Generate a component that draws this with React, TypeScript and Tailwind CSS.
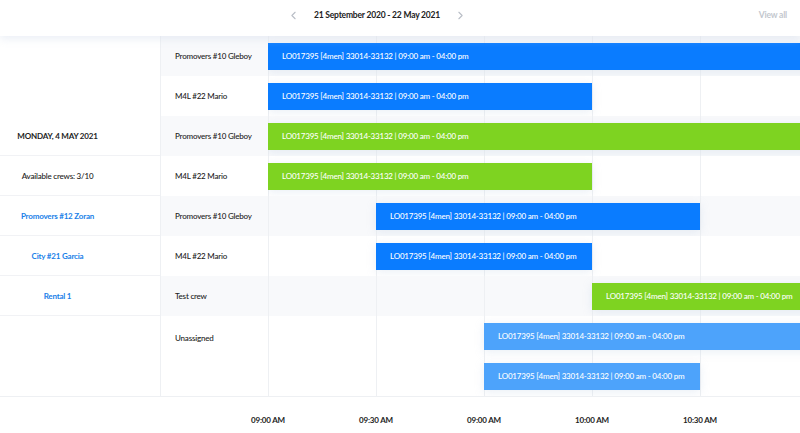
import { ChevronLeft, ChevronRight } from "lucide-react";

type Bar = { start: number; span: number; color: string };
type Row = { crew: string; bars: Bar[]; tall?: boolean };

const BLUE = "bg-[#0a7cff]";
const GREEN = "bg-[#7ed321]";
const LIGHT = "bg-[#4da3fb]";

const rows: Row[] = [
  { crew: "Promovers #10 Gleboy", bars: [{ start: 0, span: 6, color: BLUE }] },
  { crew: "M4L #22 Mario", bars: [{ start: 0, span: 3, color: BLUE }] },
  { crew: "Promovers #10 Gleboy", bars: [{ start: 0, span: 6, color: GREEN }] },
  { crew: "M4L #22 Mario", bars: [{ start: 0, span: 3, color: GREEN }] },
  { crew: "Promovers #10 Gleboy", bars: [{ start: 1, span: 3, color: BLUE }] },
  { crew: "M4L #22 Mario", bars: [{ start: 1, span: 2, color: BLUE }] },
  { crew: "Test crew", bars: [{ start: 3, span: 3, color: GREEN }] },
  {
    crew: "Unassigned",
    tall: true,
    bars: [
      { start: 2, span: 4, color: LIGHT },
      { start: 2, span: 2, color: LIGHT },
    ],
  },
];

const sideItems = [
  { label: "MONDAY, 4 MAY 2021", cls: "font-bold text-[#222]" },
  { label: "Available crews: 3/10", cls: "font-medium text-[#222]" },
  { label: "Promovers #12 Zoran", cls: "font-bold text-[#1a7fe8]" },
  { label: "City #21 Garcia", cls: "font-bold text-[#1a7fe8]" },
  { label: "Rental 1", cls: "font-bold text-[#1a7fe8]" },
];

const times = ["09:00 AM", "09:30 AM", "09:00 AM", "10:00 AM", "10:30 AM"];
const COL = 108;

function GridLines() {
  return (
    <div className="absolute inset-0 flex">
      {[0, 1, 2, 3, 4].map((i) => (
        <div key={i} className="w-[108px] shrink-0 border-l border-[#eef0f3]" />
      ))}
    </div>
  );
}

export default function App() {
  return (
    <div
      className="relative h-[433px] w-[800px] overflow-hidden whitespace-nowrap bg-white text-[8px] tracking-[-0.2px]"
      style={{ fontFamily: "Lato, 'Noto Sans', sans-serif" }}
    >
      <header className="relative z-10 flex h-[36px] items-center bg-white pb-[6px] shadow-[0_3px_8px_rgba(210,220,235,0.45)]">
        <div className="flex flex-1 items-center justify-center gap-[14px] pr-[46px]">
          <ChevronLeft size={13} strokeWidth={2} className="text-[#b9bec6]" />
          <span className="text-[8.5px] font-bold text-[#222]">
            21 September 2020 - 22 May 2021
          </span>
          <ChevronRight size={13} strokeWidth={2} className="text-[#b9bec6]" />
        </div>
        <span className="absolute right-[13px] top-[9px] text-[8.5px] font-bold text-[#c3c7ce]">
          View all
        </span>
      </header>

      <div className="flex">
        <aside className="w-[161px] shrink-0 border-r border-[#eef0f3]">
          <div className="h-[80px]" />
          {sideItems.map((s) => (
            <div
              key={s.label}
              className="flex h-[40px] items-center justify-center border-b border-[#f1f2f5] pr-[45px]"
            >
              <span className={s.cls}>{s.label}</span>
            </div>
          ))}
          <div className="h-[80px]" />
        </aside>

        <main className="flex-1">
          {rows.map((r, i) => (
            <div
              key={i}
              className={`flex ${r.tall ? "h-[80px]" : "h-[40px]"} ${
                i % 2 === 0 ? "bg-[#f8f9fb]" : "bg-white"
              }`}
            >
              <div
                className={`flex w-[107px] shrink-0 pl-[14px] font-medium text-[#222] ${
                  r.tall ? "pt-[16px]" : "items-center"
                }`}
              >
                {r.crew}
              </div>
              <div className="relative flex-1 overflow-hidden">
                <GridLines />
                <div className="relative flex h-full flex-col">
                  {r.bars.map((b, j) => (
                    <div key={j} className="flex h-[40px] items-center">
                      <div
                        className={`${b.color} flex h-[27px] shrink-0 items-center pl-[14px] font-medium text-white shadow-[0_2px_10px_rgba(170,190,220,0.25)]`}
                        style={{ marginLeft: b.start * COL, width: b.span * COL }}
                      >
                        LO017395 [4men] 33014-33132 | 09:00 am - 04:00 pm
                      </div>
                    </div>
                  ))}
                </div>
              </div>
            </div>
          ))}
        </main>
      </div>

      <div className="flex h-[37px] items-center border-t border-[#eef0f3] pt-[9px]">
        <div className="w-[214px] shrink-0" />
        {times.map((t, i) => (
          <div key={i} className="w-[108px] shrink-0 text-center font-bold text-[#222]">
            {t}
          </div>
        ))}
      </div>
    </div>
  );
}
